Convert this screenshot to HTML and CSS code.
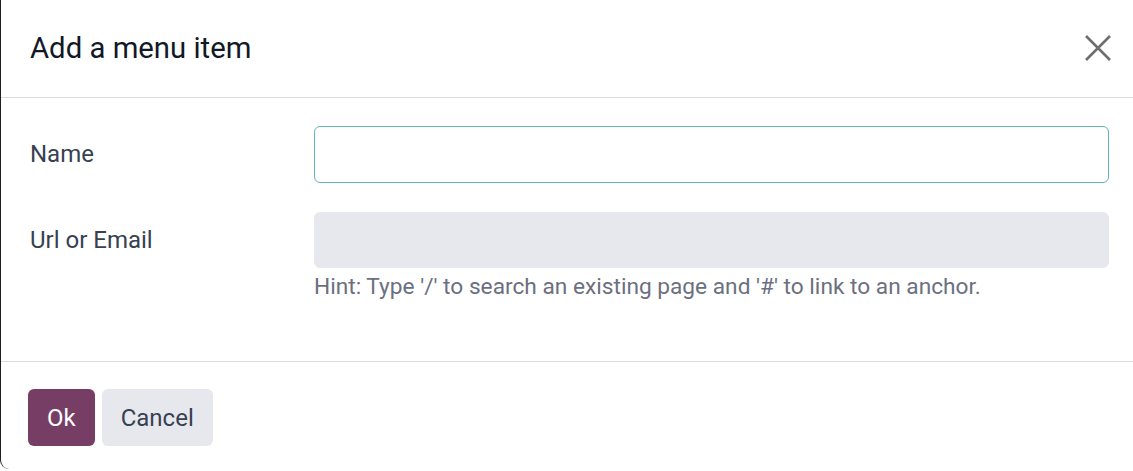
FILE: index.html
```html
<!DOCTYPE html>
<html lang="en">
<head>
<meta charset="utf-8">
<title>Add a menu item</title>
<link rel="stylesheet" href="styles.css">
</head>
<body>
<div class="dialog">
  <header class="dialog-header">
    <h4 class="dialog-title">Add a menu item</h4>
    <button class="close" aria-label="Close">
      <svg width="28" height="28" viewBox="0 0 28 28"><path d="M2 2L26 26M26 2L2 26" stroke="#6f6f6f" stroke-width="2.6" fill="none"/></svg>
    </button>
  </header>
  <main class="dialog-body">
    <div class="row">
      <label class="label">Name</label>
      <div class="field">
        <input class="input input-focus" type="text">
      </div>
    </div>
    <div class="row row-url">
      <label class="label">Url or Email</label>
      <div class="field">
        <input class="input input-grey" type="text">
        <div class="hint">Hint: Type '/' to search an existing page and '#' to link to an anchor.</div>
      </div>
    </div>
  </main>
  <footer class="dialog-footer">
    <button class="btn btn-primary">Ok</button>
    <button class="btn btn-secondary">Cancel</button>
  </footer>
</div>
</body>
</html>
```

FILE: styles.css
```css
html, body {
  margin: 0;
  padding: 0;
  background: #ffffff;
  overflow: hidden;
}
body {
  font-family: Roboto, "Noto Sans", sans-serif;
  font-size: 24px;
  color: #374151;
}
.dialog {
  width: 1139px;
  height: 469px;
  box-sizing: border-box;
  border-left: 1px solid #1f1f1f;
  border-bottom-left-radius: 9px;
  background: #fff;
  display: flex;
  flex-direction: column;
}
.dialog-header {
  height: 98px;
  flex: none;
  box-sizing: border-box;
  border-bottom: 1px solid #dcdcdc;
  display: flex;
  align-items: center;
  justify-content: space-between;
  padding: 0 27px 0 29px;
}
.dialog-title {
  margin: 0;
  font-size: 29.3px;
  font-weight: 400;
  color: #111827;
  padding-bottom: 2px;
}
.close {
  background: none;
  border: 0;
  padding: 0;
  width: 28px;
  height: 28px;
  display: flex;
  margin-bottom: 2px;
}
.dialog-body {
  height: 264px;
  flex: none;
  box-sizing: border-box;
  border-bottom: 1px solid #dcdcdc;
  padding: 28px 30px 0 29px;
}
.row {
  display: flex;
  align-items: flex-start;
}
.row-url {
  margin-top: 29px;
}
.label {
  width: 284px;
  flex: none;
  line-height: 57px;
  color: #374151;
}
.row-url .label {
  line-height: 57px;
}
.field {
  flex: 1;
}
.input {
  display: block;
  width: 100%;
  box-sizing: border-box;
  height: 57px;
  border-radius: 6px;
  font: inherit;
  outline: none;
}
.input-focus {
  border: 1px solid #5fb8b3;
  background: #fff;
}
.input-grey {
  height: 56px;
  border: 1px solid #e7e8ed;
  background: #e7e8ed;
}
.hint {
  color: #6b7080;
  font-size: 22.7px;
  margin-top: 4px;
  line-height: 30px;
}
.dialog-footer {
  display: flex;
  gap: 7px;
  padding: 27px 0 0 27px;
}
.btn {
  height: 57px;
  font: inherit;
  border-radius: 6px;
  border: 0;
  padding: 0 19px;
}
.btn-primary {
  background: #773e65;
  color: #ffffff;
}
.btn-secondary {
  background: #e7e8ed;
  color: #374151;
}
```
